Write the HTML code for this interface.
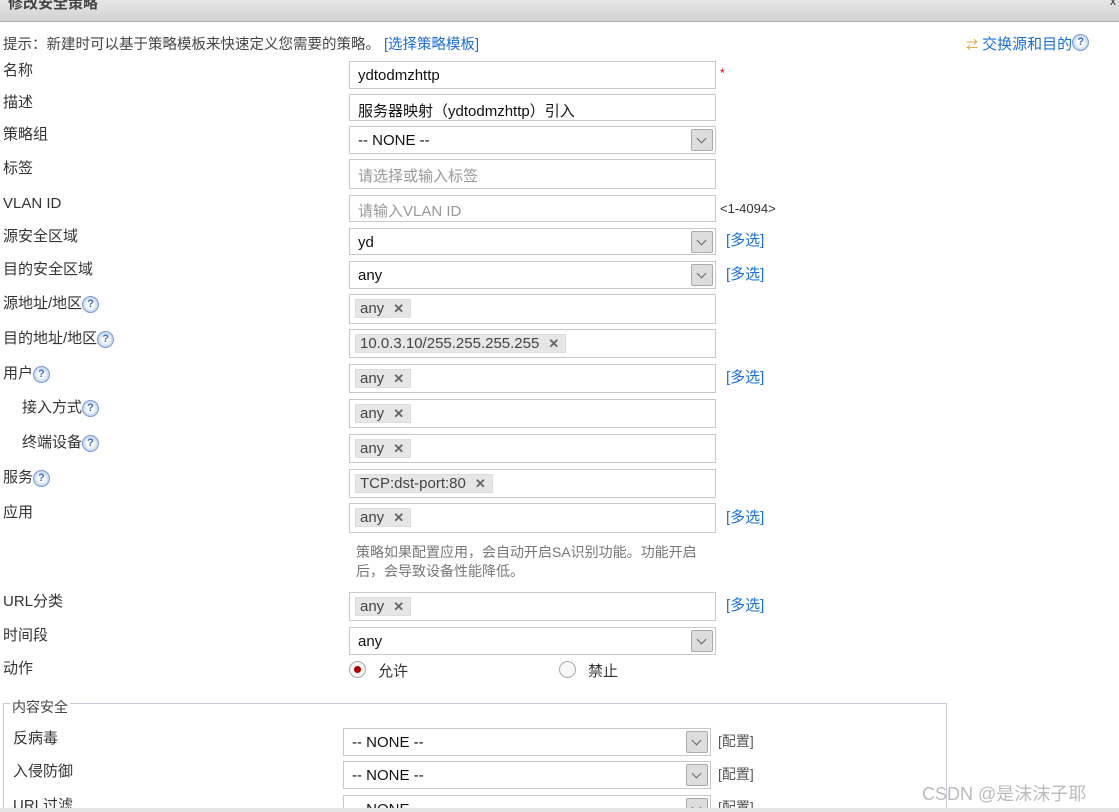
<!DOCTYPE html>
<html style="overflow:hidden;height:812px"><head><meta charset="utf-8"><style>
*{box-sizing:border-box;margin:0;padding:0}
body{width:1119px;height:812px;overflow:hidden;background:#fff;font-family:"Liberation Sans","Noto Sans CJK SC",sans-serif;font-size:14px;color:#333;position:relative}
.a{position:absolute;white-space:nowrap}
.lb{position:absolute;left:3px;font-size:15px;color:#333;line-height:18px}
.box{position:absolute;left:349px;width:367px;border:1px solid #c8c8c8;background:#fff;height:28px}
.txt{position:absolute;left:8px;top:5px;font-size:15px;color:#111}
.ph{color:#999}
.dd{position:absolute;right:2px;top:2px;width:22px;height:22px;background:#ddd;border:1px solid #aaa;border-radius:2px}
.dd:after{content:"";position:absolute;left:6px;top:5px;width:6px;height:6px;border-right:1.5px solid #666;border-bottom:1.5px solid #666;transform:rotate(45deg)}
.tag{position:absolute;left:5px;top:4px;height:19px;background:#e6e6e6;border:1px solid #ddd;font-size:15px;color:#444;padding:0 6px 0 4px;line-height:17px}
.tag b{color:#666;margin-left:9px;font-size:13px}
.lk{position:absolute;left:726px;color:#1a6fd6;font-size:15px}
.q{display:inline-block;width:17px;height:17px;border-radius:50%;background:radial-gradient(#fff 30%,#bcd0ec 75%);border:1px solid #7d9dd0;color:#3a6fc0;font-size:11px;font-weight:bold;text-align:center;line-height:15px;vertical-align:top;margin-top:1px}
.sel2{position:absolute;left:343px;width:368px;height:28px;border:1px solid #c8c8c8}
.cf{position:absolute;left:718px;font-size:14px;color:#555}
</style></head><body>
<div class="a" style="left:0;top:0;width:1119px;height:22px;background:linear-gradient(#e6e6e6,#d2d2d2);border-bottom:1px solid #aaa"></div>
<div class="a" style="left:8px;top:-8px;font-size:15px;font-weight:bold;color:#444">修改安全策略</div>
<div class="a" style="left:1110px;top:-6px;font-size:12px;color:#333">x</div>
<div class="a" style="left:3px;top:33px;color:#444;font-size:14.5px">提示：新建时可以基于策略模板来快速定义您需要的策略。 <span style="color:#1a6fd6">[选择策略模板]</span></div>
<div class="a" style="left:966px;top:33px;color:#1a6fd6;font-size:15px"><span style="color:#e0a030;font-size:12px">⇄</span> 交换源和目的<span class="q">?</span></div>

<div class="lb" style="top:62px">名称</div>
<div class="box" style="top:61px"><span class="txt">ydtodmzhttp</span></div>
<div class="a" style="left:720px;top:66px;color:#d00;font-size:12px">*</div>
<div class="lb" style="top:94px">描述</div>
<div class="box" style="top:94px;height:27px"><span class="txt">服务器映射（ydtodmzhttp）引入</span></div>
<div class="lb" style="top:126px">策略组</div>
<div class="box" style="top:126px"><span class="txt">-- NONE --</span><div class="dd"></div></div>
<div class="lb" style="top:160px">标签</div>
<div class="box" style="top:159px;height:30px"><span class="txt ph">请选择或输入标签</span></div>
<div class="lb" style="top:195px">VLAN ID</div>
<div class="box" style="top:195px;height:27px"><span class="txt ph" style="top:4px">请输入VLAN ID</span></div>
<div class="a" style="left:720px;top:201px;font-size:13px">&lt;1-4094&gt;</div>
<div class="lb" style="top:228px">源安全区域</div>
<div class="box" style="top:228px;height:27px"><span class="txt">yd</span><div class="dd"></div></div>
<div class="lk" style="top:229px">[多选]</div>
<div class="lb" style="top:261px">目的安全区域</div>
<div class="box" style="top:261px"><span class="txt">any</span><div class="dd"></div></div>
<div class="lk" style="top:263px">[多选]</div>
<div class="lb" style="top:295px">源地址/地区<span class="q">?</span></div>
<div class="box" style="top:294px;height:30px"><span class="tag">any<b>✕</b></span></div>
<div class="lb" style="top:330px">目的地址/地区<span class="q">?</span></div>
<div class="box" style="top:329px;height:29px"><span class="tag">10.0.3.10/255.255.255.255<b>✕</b></span></div>
<div class="lb" style="top:365px">用户<span class="q">?</span></div>
<div class="box" style="top:364px;height:29px"><span class="tag">any<b>✕</b></span></div>
<div class="lk" style="top:366px">[多选]</div>
<div class="lb" style="top:399px;left:22px">接入方式<span class="q">?</span></div>
<div class="box" style="top:399px;height:29px"><span class="tag">any<b>✕</b></span></div>
<div class="lb" style="top:434px;left:22px">终端设备<span class="q">?</span></div>
<div class="box" style="top:434px;height:29px"><span class="tag">any<b>✕</b></span></div>
<div class="lb" style="top:469px">服务<span class="q">?</span></div>
<div class="box" style="top:469px;height:29px"><span class="tag">TCP:dst-port:80<b>✕</b></span></div>
<div class="lb" style="top:504px">应用</div>
<div class="box" style="top:503px;height:30px"><span class="tag">any<b>✕</b></span></div>
<div class="lk" style="top:506px">[多选]</div>
<div class="a" style="left:356px;top:543px;font-size:14px;color:#777;line-height:19px">策略如果配置应用，会自动开启SA识别功能。功能开启<br>后，会导致设备性能降低。</div>
<div class="lb" style="top:593px">URL分类</div>
<div class="box" style="top:592px;height:29px"><span class="tag">any<b>✕</b></span></div>
<div class="lk" style="top:594px">[多选]</div>
<div class="lb" style="top:627px">时间段</div>
<div class="box" style="top:627px"><span class="txt">any</span><div class="dd"></div></div>
<div class="lb" style="top:660px">动作</div>
<div class="a" style="left:349px;top:661px;width:17px;height:17px;border-radius:50%;border:1px solid #aaa;background:#f4f4f4"><div style="position:absolute;left:4px;top:4px;width:7px;height:7px;border-radius:50%;background:#a00"></div></div>
<div class="a" style="left:378px;top:660px;font-size:15px">允许</div>
<div class="a" style="left:559px;top:661px;width:17px;height:17px;border-radius:50%;border:1px solid #aaa;background:#f8f8f8"></div>
<div class="a" style="left:588px;top:660px;font-size:15px">禁止</div>

<div class="a" style="left:3px;top:703px;width:944px;height:120px;border:1px solid #c8c8d8"></div>
<div class="a" style="left:10px;top:697px;background:#fff;padding:0 2px;color:#444">内容安全</div>
<div class="lb" style="top:730px;left:13px">反病毒</div>
<div class="sel2" style="top:728px"><span class="txt">-- NONE --</span><div class="dd"></div></div>
<div class="cf" style="top:731px">[配置]</div>
<div class="lb" style="top:763px;left:13px">入侵防御</div>
<div class="sel2" style="top:761px"><span class="txt">-- NONE --</span><div class="dd"></div></div>
<div class="cf" style="top:764px">[配置]</div>
<div class="lb" style="top:797px;left:13px">URL过滤</div>
<div class="sel2" style="top:795px"><span class="txt">-- NONE --</span><div class="dd"></div></div>
<div class="cf" style="top:797px">[配置]</div>
<div class="a" style="left:0;top:808px;width:1119px;height:4px;background:#e4e4e4"></div>
<div class="a" style="left:922px;top:780px;font-size:18px;color:#bbb">CSDN @是沫沫子耶</div>
</body></html>
